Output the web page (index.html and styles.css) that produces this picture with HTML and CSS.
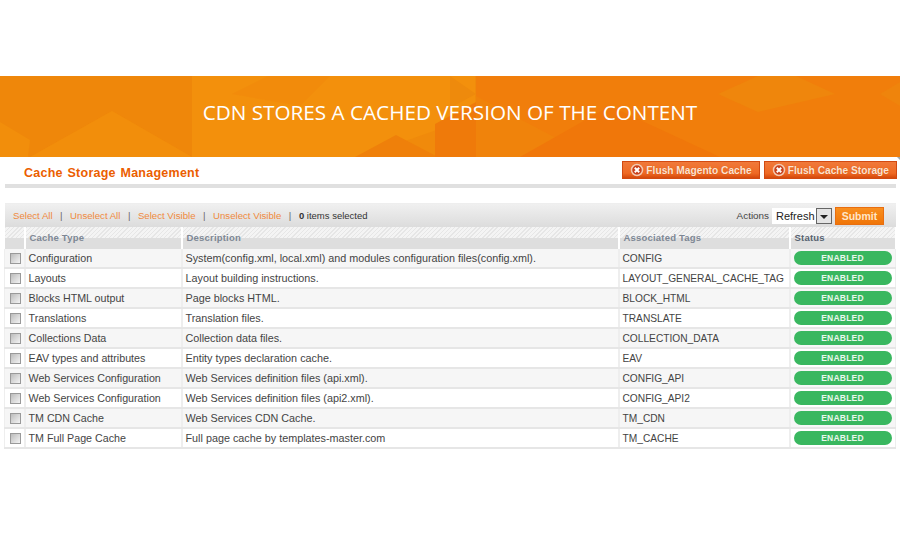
FILE: index.html
```html
<!DOCTYPE html>
<html lang="en">
<head>
    <meta charset="UTF-8">
    <title>Cache Storage Management</title>
    <link rel="stylesheet" href="styles.css">
</head>
<body>
    <div class="banner">
        <svg class="banner-art" width="900" height="81" viewBox="0 0 900 81">
            <polygon points="0,0 192,0 192,81 112,35 30,81 0,62" fill="#ef870a"/>
            <polygon points="30,81 112,35 192,81" fill="#f28e0b"/>
            <polygon points="0,46 30,64 28,81 0,81" fill="#f28e0b"/>
            <polygon points="192,0 475,0 475,20 476,40 360,81 192,81" fill="#f3900c"/>
            <polygon points="232,18 268,0 330,0 300,30" fill="#f1890b" opacity="0.6"/>
            <polygon points="355,81 396,59 438,81" fill="#ef800a"/>
            <polygon points="435,81 435,48 476,26 476,81" fill="#ef7a0a"/>
            <polygon points="450,0 476,18 450,32" fill="#ee8a0c"/>
            <polygon points="476,0 900,0 900,81 476,81" fill="#f17e0b"/>
            <polygon points="476,20 556,62 570,81 476,81" fill="#f0830b"/>
            <polygon points="520,81 610,30 720,81" fill="#f0770a"/>
            <polygon points="718,18 758,0 796,0 835,18 758,36" fill="#ef860c"/>
            <polygon points="880,18 900,6 900,30" fill="#ef840c"/>
        </svg>
        <h1>CDN STORES A CACHED VERSION OF THE CONTENT</h1>
    </div>

    <div class="page-head">
        <h3>Cache Storage Management</h3>
        <div class="head-buttons">
            <button class="flush" type="button">
                <svg width="14" height="14" viewBox="0 0 14 14"><circle cx="7" cy="7" r="5.5" fill="#c9401a" stroke="#f3c9b0" stroke-width="1.5"/><path d="M4.8 4.8l4.4 4.4M9.2 4.8l-4.4 4.4" stroke="#fff" stroke-width="2"/></svg>
                Flush Magento Cache
            </button>
            <button class="flush" type="button">
                <svg width="14" height="14" viewBox="0 0 14 14"><circle cx="7" cy="7" r="5.5" fill="#c9401a" stroke="#f3c9b0" stroke-width="1.5"/><path d="M4.8 4.8l4.4 4.4M9.2 4.8l-4.4 4.4" stroke="#fff" stroke-width="2"/></svg>
                Flush Cache Storage
            </button>
        </div>
    </div>

    <div class="massaction">
        <div class="mass-links">
            <a>Select All</a><i>|</i>
            <a>Unselect All</a><i>|</i>
            <a>Select Visible</a><i>|</i>
            <a>Unselect Visible</a><i>|</i>
            <span><b>0</b> items selected</span>
        </div>
        <div class="mass-actions">
            <label>Actions</label>
            <div class="fake-select">Refresh<span class="arrow"></span></div>
            <button class="submit" type="button">Submit</button>
        </div>
    </div>

    <table class="grid">
        <colgroup>
            <col class="c-check"><col class="c-type"><col class="c-desc"><col class="c-tags"><col class="c-status">
        </colgroup>
        <thead>
            <tr>
                <th></th>
                <th>Cache Type</th>
                <th>Description</th>
                <th>Associated Tags</th>
                <th class="dark">Status</th>
            </tr>
        </thead>
        <tbody>
            <tr>
                <td><span class="check"></span></td>
                <td>Configuration</td>
                <td>System(config.xml, local.xml) and modules configuration files(config.xml).</td>
                <td>CONFIG</td>
                <td><span class="enabled">ENABLED</span></td>
            </tr>
            <tr>
                <td><span class="check"></span></td>
                <td>Layouts</td>
                <td>Layout building instructions.</td>
                <td>LAYOUT_GENERAL_CACHE_TAG</td>
                <td><span class="enabled">ENABLED</span></td>
            </tr>
            <tr>
                <td><span class="check"></span></td>
                <td>Blocks HTML output</td>
                <td>Page blocks HTML.</td>
                <td>BLOCK_HTML</td>
                <td><span class="enabled">ENABLED</span></td>
            </tr>
            <tr>
                <td><span class="check"></span></td>
                <td>Translations</td>
                <td>Translation files.</td>
                <td>TRANSLATE</td>
                <td><span class="enabled">ENABLED</span></td>
            </tr>
            <tr>
                <td><span class="check"></span></td>
                <td>Collections Data</td>
                <td>Collection data files.</td>
                <td>COLLECTION_DATA</td>
                <td><span class="enabled">ENABLED</span></td>
            </tr>
            <tr>
                <td><span class="check"></span></td>
                <td>EAV types and attributes</td>
                <td>Entity types declaration cache.</td>
                <td>EAV</td>
                <td><span class="enabled">ENABLED</span></td>
            </tr>
            <tr>
                <td><span class="check"></span></td>
                <td>Web Services Configuration</td>
                <td>Web Services definition files (api.xml).</td>
                <td>CONFIG_API</td>
                <td><span class="enabled">ENABLED</span></td>
            </tr>
            <tr>
                <td><span class="check"></span></td>
                <td>Web Services Configuration</td>
                <td>Web Services definition files (api2.xml).</td>
                <td>CONFIG_API2</td>
                <td><span class="enabled">ENABLED</span></td>
            </tr>
            <tr>
                <td><span class="check"></span></td>
                <td>TM CDN Cache</td>
                <td>Web Services CDN Cache.</td>
                <td>TM_CDN</td>
                <td><span class="enabled">ENABLED</span></td>
            </tr>
            <tr>
                <td><span class="check"></span></td>
                <td>TM Full Page Cache</td>
                <td>Full page cache by templates-master.com</td>
                <td>TM_CACHE</td>
                <td><span class="enabled">ENABLED</span></td>
            </tr>
        </tbody>
    </table>
</body>
</html>
```

FILE: styles.css
```css
/* General */
body {
    margin: 0;
    padding: 76px 0 0;
    background-color: #fff;
    color: #444;
    font-family: "Liberation Sans", Arial, sans-serif;
    font-size: 10.7px;
}

/* Banner */
.banner {
    position: relative;
    height: 81px;
    background-color: #f08a0b;
    display: flex;
    align-items: center;
    justify-content: center;
    overflow: hidden;
}
.banner-art {
    position: absolute;
    left: 0;
    top: 0;
}
.banner h1 {
    position: relative;
    margin: 0 0 9px;
    color: #fff;
    font-family: "Open Sans", sans-serif;
    font-size: 20.7px;
    font-weight: 400;
}

/* Title row */
.page-head {
    position: relative;
    display: flex;
    justify-content: space-between;
    align-items: flex-start;
    height: 23px;
    margin: 0 4px 0 5px;
    padding-top: 4px;
    border-bottom: 4px solid #e0e0e0;
}
.page-head::after {
    content: "";
    position: absolute;
    right: -4px;
    top: 0;
    border-top: 3px solid #9aa7ad;
    border-left: 3px solid transparent;
}
.page-head h3 {
    margin: 5px 0 0 19px;
    color: #eb5e00;
    font-size: 12.5px;
    font-weight: bold;
    letter-spacing: 0.25px;
    word-spacing: 1px;
}
.head-buttons {
    display: flex;
    gap: 4px;
    margin-right: -1px;
}
.flush {
    display: flex;
    align-items: center;
    gap: 2px;
    height: 18px;
    padding: 0 7px;
    border: 1px solid #d14a12;
    background: linear-gradient(#f0793a, #ef6a24 70%, #d4480b);
    color: #ffe3d0;
    font-family: inherit;
    font-size: 10.2px;
    font-weight: bold;
    text-shadow: 0 0 1px #c04a10;
}

/* Mass action bar */
.massaction {
    display: flex;
    justify-content: space-between;
    align-items: center;
    height: 24px;
    margin: 15px 4px 0 5px;
    padding: 0 12px 0 8px;
    background: linear-gradient(#f0f0f0, #dcdcdc);
    border-top: 1px solid #eee;
    box-sizing: border-box;
    font-size: 9.9px;
}
.mass-links {
    display: flex;
    align-items: center;
    font-size: 9.65px;
}
.mass-links a {
    color: #f08a3c;
}
.mass-links i {
    margin: 0 7.5px;
    font-style: normal;
    color: #666;
}
.mass-links span {
    color: #333;
    font-size: 9.5px;
}
.mass-actions {
    display: flex;
    align-items: center;
    gap: 3px;
}
.fake-select {
    display: flex;
    align-items: center;
    justify-content: space-between;
    width: 60px;
    height: 16px;
    padding-left: 4px;
    box-sizing: border-box;
    background-color: #fff;
    color: #222;
    font-size: 11px;
}
.arrow {
    position: relative;
    width: 14px;
    height: 14px;
    border: 1px solid #666;
    background-color: #e4e4e4;
}
.arrow::after {
    content: "";
    position: absolute;
    left: 3px;
    top: 6px;
    border: 4px solid transparent;
    border-top-color: #222;
    border-bottom: 0;
}
.submit {
    height: 18px;
    width: 49px;
    padding: 0;
    border: 1px solid #e86e10;
    background: linear-gradient(#f98f1f, #f07508);
    color: #ffe6c8;
    font-family: inherit;
    font-size: 10.5px;
    font-weight: bold;
}

/* Grid */
.grid {
    width: 891px;
    margin-left: 4px;
    border-collapse: collapse;
    table-layout: fixed;
}
.c-check { width: 20px; }
.c-type { width: 157px; }
.c-desc { width: 437px; }
.c-tags { width: 171px; }
.c-status { width: 106px; }

.grid th {
    height: 22px;
    padding: 0 0 1px 4px;
    box-sizing: border-box;
    background:
        linear-gradient(transparent 0 52%, #dedede 52%),
        repeating-linear-gradient(135deg, #e6e6e6 0 1px, #f4f4f4 1px 3px);
    border-right: 2px solid #fff;
    color: #7d8794;
    font-size: 9.5px;
    font-weight: bold;
    text-align: left;
    letter-spacing: 0.2px;
}
.grid th.dark {
    color: #566270;
}
.grid td {
    height: 18px;
    padding: 0 0 0 3px;
    border-right: 2px solid #eee;
    border-bottom: 2px solid #e6e6e6;
    color: #444;
    white-space: nowrap;
    overflow: hidden;
}
.grid td:nth-child(3) {
    font-size: 10.8px;
}
.grid td:nth-child(4) {
    font-size: 10.2px;
}
.grid td:first-child {
    border-left: 1px solid #eee;
}
.grid td:last-child {
    border-right: 1px solid #eee;
}
.grid tbody tr:nth-child(odd) td {
    background-color: #f6f6f6;
}
.check {
    display: block;
    width: 9px;
    height: 9px;
    margin-left: 2px;
    border: 1px solid #999;
    background: linear-gradient(135deg, #bbb, #f4f4f4);
}
.enabled {
    display: block;
    width: 98px;
    height: 14px;
    border-radius: 7px;
    background-color: #39b75f;
    color: #e8f6ec;
    font-size: 8.5px;
    font-weight: bold;
    line-height: 15px;
    text-align: center;
    letter-spacing: 0.2px;
}
```
